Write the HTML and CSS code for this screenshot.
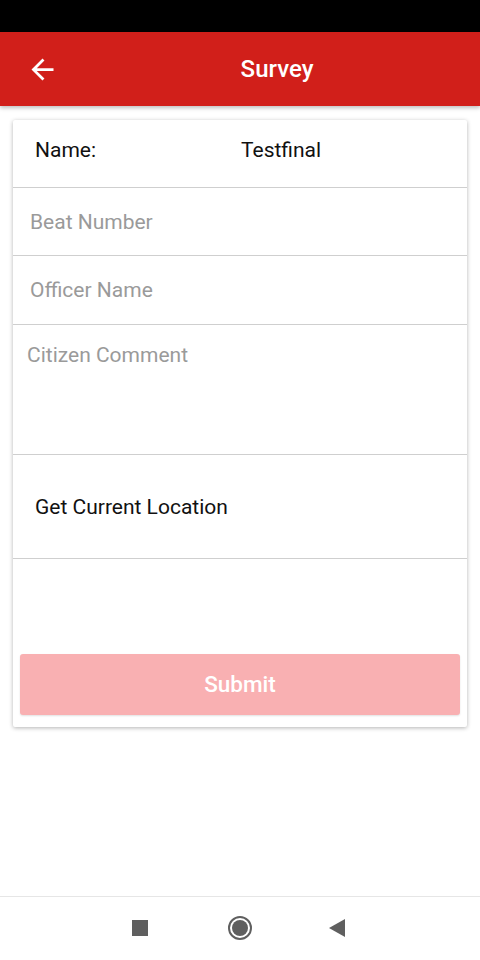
FILE: index.html
```html
<!DOCTYPE html>
<html lang="en">
<head>
  <meta charset="UTF-8">
  <meta name="viewport" content="width=device-width, initial-scale=1.0">
  <title>Survey</title>
  <link rel="stylesheet" href="styles.css">
</head>
<body>
  <div class="status-bar"></div>
  <header class="app-bar">
    <button class="back" aria-label="Back">
      <svg viewBox="0 0 24 24"><path d="M20 11H7.83l5.59-5.59L12 4l-8 8 8 8 1.41-1.41L7.83 13H20v-2z" fill="#fff"/></svg>
    </button>
    <h1>Survey</h1>
  </header>
  <main class="content">
    <div class="card">
      <div class="row row-name">
        <span class="label">Name:</span>
        <span class="value">Testfinal</span>
      </div>
      <div class="row row-field">
        <input type="text" placeholder="Beat Number">
      </div>
      <div class="row row-field row-officer">
        <input type="text" placeholder="Officer Name">
      </div>
      <div class="row row-comment">
        <textarea placeholder="Citizen Comment"></textarea>
      </div>
      <div class="row row-location">Get Current Location</div>
      <div class="spacer"></div>
      <button class="submit" disabled>Submit</button>
    </div>
  </main>
  <nav class="nav-bar">
    <span class="nav-square"></span>
    <span class="nav-home"></span>
    <svg class="nav-back" width="17" height="18" viewBox="0 0 17 18"><path d="M16 0L0 9l16 9z" fill="#5f5f5f"/></svg>
  </nav>
</body>
</html>
```
FILE: styles.css
```css
* {
  box-sizing: border-box;
}
body {
  margin: 0;
  height: 960px;
  display: flex;
  flex-direction: column;
  background-color: #fff;
  font-family: Roboto, "Noto Sans", sans-serif;
  color: #111;
}
.status-bar {
  height: 32px;
  background-color: #000;
}
.app-bar {
  height: 74px;
  background-color: #d11f1a;
  display: flex;
  align-items: center;
  padding: 0 20px;
  box-shadow: 0 2px 4px rgba(0, 0, 0, 0.25);
  position: relative;
  z-index: 1;
}
.back {
  background: none;
  border: none;
  padding: 0;
  width: 44px;
  height: 44px;
  display: flex;
  align-items: center;
  justify-content: center;
  margin-left: 0;
}
.back svg {
  width: 33px;
  height: 33px;
}
.app-bar h1 {
  flex: 1;
  margin: 0 0 0 30px;
  text-align: center;
  color: #fff;
  font-size: 24px;
  font-weight: 500;
}
.content {
  flex: 1;
  padding: 14px 13px 0;
}
.card {
  background: #fff;
  box-shadow: 0 1px 4px rgba(0, 0, 0, 0.3);
  border-radius: 2px;
  display: flex;
  flex-direction: column;
  padding-bottom: 12px;
}
.row {
  border-bottom: 1px solid #cfcfcf;
}
.row-name {
  height: 68px;
  display: flex;
  align-items: center;
  padding: 0 22px 8px;
  font-size: 21px;
}
.row-name .label {
  width: 206px;
}
.row-field {
  height: 68px;
  display: flex;
  align-items: center;
  padding: 0 17px 0;
}
.row-officer {
  height: 69px;
}
input, textarea {
  border: none;
  outline: none;
  background: none;
  width: 100%;
  font-family: inherit;
  font-size: 21px;
  color: #111;
  padding: 0;
}
input::placeholder, textarea::placeholder {
  color: #9a9a9a;
}
.row-comment {
  height: 130px;
  padding: 18px 14px 0;
}
textarea {
  height: 100px;
  resize: none;
}
.row-location {
  height: 104px;
  display: flex;
  align-items: center;
  padding: 0 22px;
  font-size: 21px;
}
.spacer {
  height: 95px;
}
.submit {
  margin: 0 7px;
  height: 61px;
  border: none;
  border-radius: 3px;
  background-color: #f9b0b2;
  color: #fff;
  font-family: inherit;
  font-size: 22.5px;
  font-weight: 500;
  padding-bottom: 2px;
  box-shadow: 0 1px 2px rgba(0, 0, 0, 0.12);
}
.nav-bar {
  height: 64px;
  border-top: 1px solid #e6e6e6;
  display: flex;
  align-items: center;
  justify-content: center;
  padding-right: 2px;
  padding-bottom: 2px;
}
.nav-square {
  width: 16px;
  height: 16px;
  background-color: #5f5f5f;
  margin-right: 80px;
}
.nav-home {
  width: 24px;
  height: 24px;
  border: 2px solid #5f5f5f;
  border-radius: 50%;
  display: flex;
  align-items: center;
  justify-content: center;
  margin-right: 77px;
}
.nav-home::after {
  content: "";
  width: 16px;
  height: 16px;
  border-radius: 50%;
  background-color: #5f5f5f;
}
```
